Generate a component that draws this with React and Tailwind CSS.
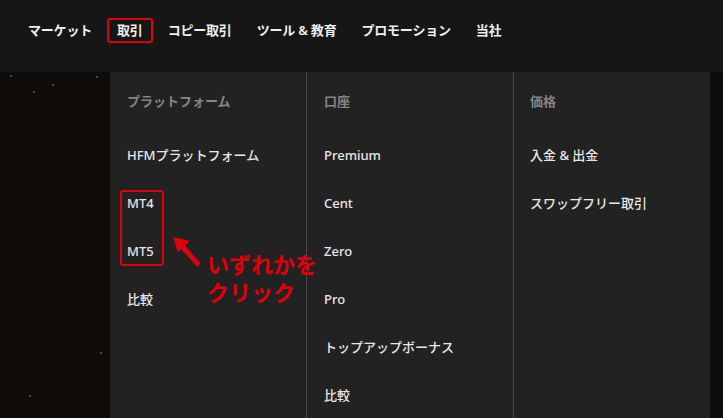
import React from "react";

const font = { fontFamily: '"Noto Sans", "Noto Sans CJK JP", sans-serif' };

const nav = ["マーケット", "取引", "コピー取引", "ツール & 教育", "プロモーション", "当社"];

const cols = [
  { title: "プラットフォーム", items: ["HFMプラットフォーム", "MT4", "MT5", "比較"], cls: "w-[196px] pl-[17px]" },
  { title: "口座", items: ["Premium", "Cent", "Zero", "Pro", "トップアップボーナス", "比較"], cls: "w-[207px] pl-[17px] border-l border-[#474747]" },
  { title: "価格", items: ["入金 & 出金", "スワップフリー取引"], cls: "flex-1 pl-[16px] border-l border-[#474747]" },
];

const specks = [
  [10, 75, 2], [52, 84, 1.5], [96, 76, 2], [33, 91, 1.5], [100, 352, 2], [29, 395, 1.5],
];

export default function App() {
  return (
    <div className="relative w-[723px] h-[418px] overflow-hidden bg-[#0e0b08]" style={font}>
      {/* top nav */}
      <div className="h-[72px] bg-[#161616] flex items-start pt-[20px] pl-[28px] gap-[25px]">
        {nav.map((n) => (
          <span
            key={n}
            className={
              "text-[13px] font-semibold text-[#eeeeee] leading-[20px] whitespace-pre tracking-[-0.2px] " +
              (n === "取引" ? "relative" : "")
            }
          >
            {n}
            {n === "取引" && (
              <span className="absolute left-[-10px] right-[-10px] top-[-2px] bottom-[-3px] border-2 border-[#e0000b] rounded-[3px]" />
            )}
          </span>
        ))}
      </div>

      {/* background specks */}
      {specks.map(([x, y, s], i) => (
        <span
          key={i}
          className="absolute rounded-full bg-[#9a9a9a] opacity-60"
          style={{ left: x, top: y, width: s, height: s }}
        />
      ))}

      {/* dropdown panel */}
      <div className="ml-[110px] w-[600px] h-[346px] bg-[#222222] flex">
        {cols.map((c) => (
          <div key={c.title} className={c.cls + " h-full pt-[19px]"}>
            <div className="text-[13px] font-semibold text-[#858585] leading-[20px] h-[20px]">{c.title}</div>
            <div className="mt-[21px] flex flex-col">
              {c.items.map((it, i) => (
                <div key={i} className="h-[48px] flex items-center text-[13px] font-medium text-[#e8e8e8] whitespace-pre">
                  {it}
                </div>
              ))}
            </div>
          </div>
        ))}
      </div>

      {/* annotation: box around MT4 / MT5 */}
      <div className="absolute left-[120px] top-[190px] w-[44px] h-[76px] border-2 border-[#e0000b] rounded-[3px]" />

      {/* arrow */}
      <svg className="absolute left-[168px] top-[230px]" width="40" height="40" viewBox="0 0 40 40">
        <line x1="31" y1="35" x2="12" y2="14" stroke="#e0000b" strokeWidth="5" strokeLinecap="butt" />
        <polygon points="5,7 22,11 10,22" fill="#e0000b" />
      </svg>

      {/* annotation text */}
      <div className="absolute left-[207px] top-[250px] text-[22px] font-bold text-[#e0000b] leading-[28px]">
        <div>いずれかを</div>
        <div>クリック</div>
      </div>
    </div>
  );
}
